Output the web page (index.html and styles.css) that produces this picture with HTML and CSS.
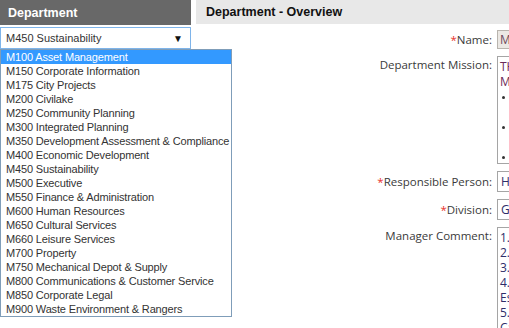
FILE: index.html
```html
<!DOCTYPE html>
<html>
<head>
<meta charset="utf-8">
<title>Department - Overview</title>
<link rel="stylesheet" href="styles.css">
</head>
<body>
<div class="page">

<div class="side">
  <div class="side-head">Department</div>
  <div class="picker">
    <div class="select">
      <span>M450 Sustainability</span>
      <span class="arrow">&#9660;</span>
    </div>
    <ul class="options">
      <li class="current">M100 Asset Management</li>
      <li>M150 Corporate Information</li>
      <li>M175 City Projects</li>
      <li>M200 Civilake</li>
      <li>M250 Community Planning</li>
      <li>M300 Integrated Planning</li>
      <li>M350 Development Assessment &amp; Compliance</li>
      <li>M400 Economic Development</li>
      <li>M450 Sustainability</li>
      <li>M500 Executive</li>
      <li>M550 Finance &amp; Administration</li>
      <li>M600 Human Resources</li>
      <li>M650 Cultural Services</li>
      <li>M660 Leisure Services</li>
      <li>M700 Property</li>
      <li>M750 Mechanical Depot &amp; Supply</li>
      <li>M800 Communications &amp; Customer Service</li>
      <li>M850 Corporate Legal</li>
      <li>M900 Waste Environment &amp; Rangers</li>
    </ul>
  </div>
</div>

<div class="main">
  <div class="main-head">Department - Overview</div>
  <div class="form">
    <div class="label mid"><span class="req">*</span>Name:</div>
    <div class="field name">M450 Sustainability</div>

    <div class="label top">Department Mission:</div>
    <div class="field area mission">
      <div>THE SUSTAINABILITY UNIT</div>
      <div>Mission statement for the unit</div>
      <div class="bullet">Lead the organisation's</div>
      <div class="cont">environmental programme</div>
      <div class="bullet">Support all departments to</div>
      <div class="cont">reduce energy and water use</div>
      <div class="bullet">Report on progress</div>
    </div>

    <div class="label mid"><span class="req">*</span>Responsible Person:</div>
    <div class="field box">Head of Sustainability</div>

    <div class="label mid"><span class="req">*</span>Division:</div>
    <div class="field box">General Manager</div>

    <div class="label top">Manager Comment:</div>
    <div class="field area comment">
      <div>1. Carbon reduction plan</div>
      <div>2. Water strategy</div>
      <div>3. Waste review</div>
      <div>4. Biodiversity and</div>
      <div>Estuary health</div>
      <div>5. Community education</div>
      <div>Campaigns</div>
    </div>
  </div>
</div>

</div>
</body>
</html>
```

FILE: styles.css
```css
body {
   margin: 0;
   background-color: white;
   font-family: "Liberation Sans", Arial, sans-serif;
   overflow: hidden;
}

.page {
   display: flex;
   gap: 5px;
   width: 509px;
   height: 328px;
   overflow: hidden;
}

/* left column */

.side {
   width: 191px;
   flex: none;
   position: relative;
}

.side-head {
   height: 25px;
   background-color: #686868;
   color: white;
   font-weight: bold;
   font-size: 12.5px;
   line-height: 26px;
   padding-left: 8px;
}

.picker {
   position: relative;
   margin-top: 2px;
}

.select {
   display: flex;
   justify-content: space-between;
   align-items: center;
   height: 20px;
   border: 1px solid #7eb4ea;
   padding: 0 7px 0 5px;
   font-size: 11px;
   color: #333;
}

.arrow {
   font-size: 10px;
   color: #111;
}

.options {
   position: absolute;
   top: 22px;
   left: 0;
   width: 230px;
   margin: 0;
   padding: 0;
   list-style: none;
   background-color: white;
   border: 1px solid #7f9db9;
   font-size: 11px;
   letter-spacing: -0.15px;
   color: #333;
   z-index: 2;
}

.options li {
   height: 14px;
   line-height: 15px;
   padding-left: 5px;
   white-space: nowrap;
}

.options li.current {
   background-color: #3399ff;
   color: white;
}

/* right column */

.main {
   flex: 1;
   overflow: hidden;
}

.main-head {
   height: 24px;
   background-color: #e8e8e8;
   font-weight: bold;
   font-size: 12.5px;
   line-height: 24px;
   padding-left: 10px;
   color: #111;
}

.form {
   display: grid;
   grid-template-columns: 296px 200px;
   column-gap: 5px;
   row-gap: 7px;
   padding-top: 6px;
   font-family: "Open Sans", "Noto Sans", sans-serif;
   font-size: 11px;
}

.label {
   text-align: right;
   color: #3a3a3a;
   white-space: nowrap;
   font-size: 11.5px;
}

.label.mid {
   align-self: center;
}

.label.top {
   padding-top: 1px;
}

.req {
   color: #e8322b;
}

.field {
   border: 1px solid #a5a5a5;
   padding: 0 2px;
   white-space: nowrap;
   color: #2e2e6a;
   font-size: 12px;
}

.field.name {
   height: 17px;
   line-height: 18px;
   background-color: #ebe8e4;
   color: #6e4a5e;
   border-color: #b8b4ae;
}

.field.box {
   height: 19px;
   line-height: 20px;
   padding-left: 3px;
}

.field.area {
   line-height: 15px;
   padding-top: 2px;
}

.mission {
   height: 104px;
   color: #6b2a58;
}

.comment {
   height: 120px;
   line-height: 14.5px;
   color: #2e2e6a;
}

.bullet {
   position: relative;
   padding-left: 10px;
   color: #333;
}

.bullet::before {
   content: "";
   position: absolute;
   left: 2px;
   top: 7px;
   width: 3px;
   height: 3px;
   border-radius: 50%;
   background-color: #333;
}

.cont {
   padding-left: 10px;
   color: #333;
}
```
